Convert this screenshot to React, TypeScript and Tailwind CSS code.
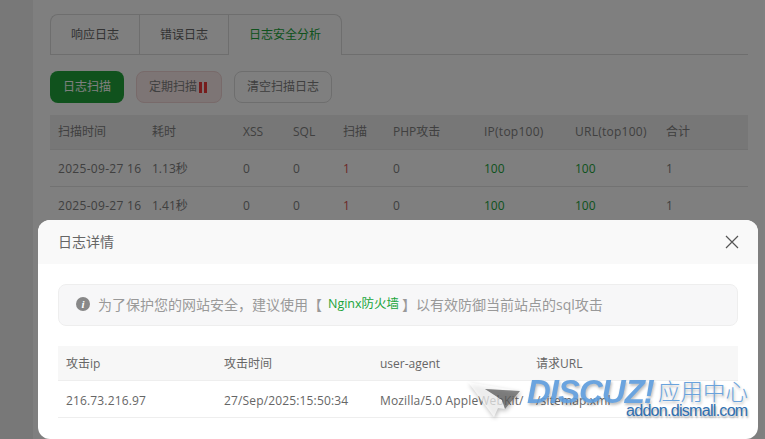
const logFont = "font-['Open_Sans','Noto_Sans_CJK_SC',sans-serif]";

const scanCols = ["w-[94px]", "w-[91px]", "w-[50px]", "w-[50px]", "w-[50px]", "w-[91px]", "w-[91px]", "w-[91px]", "w-[90px]"];
const scanHead = ["扫描时间", "耗时", "XSS", "SQL", "扫描", "PHP攻击", "IP(top100)", "URL(top100)", "合计"];
const scanRows = [
  ["2025-09-27 16", "1.13秒", "0", "0", "1", "0", "100", "100", "1"],
  ["2025-09-27 16", "1.41秒", "0", "0", "1", "0", "100", "100", "1"],
];
const detailCols = ["w-[158px]", "w-[156px]", "w-[156px]", "w-[210px]"];

function cellColor(col: number) {
  if (col === 4) return "text-[#d85050]";
  if (col === 6 || col === 7) return "text-[#20a53a]";
  return "text-[#808080]";
}

function Tabs() {
  const tabs = ["响应日志", "错误日志", "日志安全分析"];
  return (
    <div className="flex h-[41px] border-b border-[#dcdcdc]">
      {tabs.map((t, i) => (
        <div
          key={t}
          className={
            i === 2
              ? "-mb-px flex h-[41px] w-[114px] items-center justify-center rounded-tr-lg border-x border-t border-[#dcdcdc] bg-white text-[#20a53a]"
              : i === 0
                ? "flex h-10 w-[89px] items-center justify-center rounded-tl-lg border-l border-t border-[#dcdcdc] text-[#666]"
                : "flex h-10 w-[89px] items-center justify-center border-l border-t border-[#dcdcdc] text-[#666]"
          }
        >
          {t}
        </div>
      ))}
    </div>
  );
}

function Toolbar() {
  return (
    <div className="mt-4 flex gap-3">
      <button className="h-8 w-[74px] rounded-lg bg-[#20a53a] text-white">日志扫描</button>
      <button className="flex h-8 w-[86px] items-center justify-center gap-[2px] rounded-lg border border-[#f0d4d4] bg-[#fbeaea] pr-[2px] text-[#808080]">
        定期扫描
        <span className="flex gap-[2px]">
          <span className="h-[11px] w-[3px] bg-[#ef3b3b]" />
          <span className="h-[11px] w-[3px] bg-[#ef3b3b]" />
        </span>
      </button>
      <button className="h-8 w-[98px] rounded-lg border border-[#dcdcdc] bg-white text-[#808080]">清空扫描日志</button>
    </div>
  );
}

function ScanTable() {
  return (
    <div className="mt-3 w-[698px]">
      <div className="flex h-[35px] items-center border-b border-[#e4e4e4] bg-[#eeeeee] text-[#808080]">
        {scanHead.map((h, i) => (
          <div key={h} className={`${scanCols[i]} ${i === 6 || i === 7 ? "tracking-[0.25px]" : ""} shrink-0 pl-2`}>{h}</div>
        ))}
      </div>
      {scanRows.map((row, r) => (
        <div key={r} className="flex h-[37px] items-center border-b border-[#e4e4e4] pt-[2px]">
          {row.map((v, i) => (
            <div key={i} className={`${scanCols[i]} ${cellColor(i)} ${i === 0 ? "tracking-[0.3px]" : ""} shrink-0 overflow-hidden pl-2 whitespace-nowrap`}>{v}</div>
          ))}
        </div>
      ))}
    </div>
  );
}

function Watermark() {
  return (
    <div className="absolute left-[466px] top-[376px] h-[48px] w-[290px]">
      <svg className="absolute left-0 top-0 drop-shadow-[1px_2px_2px_rgba(0,0,0,0.35)]" width="60" height="46" viewBox="0 0 60 46">
        <path d="M2 6 L54 15 L19 13 L36 24 L39 33 L32 32 L28 41 Z" fill="#ffffff" fillOpacity="0.7" />
        <path d="M19 13 L54 15 L39 33 L36 24 Z" fill="#5f5f5f" fillOpacity="0.72" />
      </svg>
      <div className="absolute left-[61px] top-[-1px] font-['Liberation_Sans',sans-serif] text-[33px] leading-[34px] font-bold tracking-[-1px] whitespace-nowrap text-[#5b9bdc] italic opacity-90 [text-shadow:1px_2px_3px_rgba(0,0,0,0.3)]">
        DISCUZ!
      </div>
      <div className="absolute left-[192px] top-[-1px] font-['Noto_Sans_CJK_SC',sans-serif] text-[22.5px] leading-[30px] font-light whitespace-nowrap text-[#6aa3dd] [text-shadow:1px_2px_3px_rgba(0,0,0,0.3)]">
        应用中心
      </div>
      <div className="absolute left-[160px] top-[24px] font-['Liberation_Sans',sans-serif] text-[16px] leading-[22px] tracking-[-0.7px] whitespace-nowrap text-[#2f6fb0] [text-shadow:1px_2px_2px_rgba(0,0,0,0.3)]">
        addon.dismall.com
      </div>
    </div>
  );
}

function DetailDialog() {
  return (
    <div className="absolute left-[38px] top-[220px] h-[219px] w-[720px] overflow-hidden rounded-xl bg-white text-[12px]">
      <div className="flex h-11 items-center justify-between bg-[#f9f9f9] pl-5 pr-[19px]">
        <span className="pb-[2px] text-[14px] text-[#666]">日志详情</span>
        <svg width="14" height="14" viewBox="0 0 14 14" fill="none" stroke="#555" strokeWidth="1.2">
          <path d="M1 1 L13 13 M13 1 L1 13" />
        </svg>
      </div>
      <div className="px-5 pt-5">
        <div className="flex h-[42px] items-center rounded-lg border border-[#eee] bg-[#f7f7f8] pb-[2px] pl-[17px] text-[14px] text-[#999]">
          <span className="flex h-[14px] w-[14px] items-center justify-center rounded-full bg-[#888] font-['Liberation_Serif',serif] text-[11px] leading-none font-bold text-white italic">i</span>
          <span className="ml-2">为了保护您的网站安全，建议使用【</span>
          <span className="ml-[6px] text-[12.5px] text-[#20a53a]">Nginx防火墙</span>
          <span className="ml-[3px]">】以有效防御当前站点的sql攻击</span>
        </div>
        <div className="mt-5">
          <div className="flex h-[35px] items-center border-b border-[#eee] bg-[#f7f7f7] pt-[2px] text-[#666]">
            {["攻击ip", "攻击时间", "user-agent", "请求URL"].map((h, i) => (
              <div key={h} className={`${detailCols[i]} pl-2`}>{h}</div>
            ))}
          </div>
          <div className="flex h-[37px] items-center border-b border-[#eee] pt-[3px] tracking-[0.15px] text-[#666]">
            {["216.73.216.97", "27/Sep/2025:15:50:34", "Mozilla/5.0 AppleWebKit/", "/sitemap.xml"].map((v, i) => (
              <div key={v} className={`${detailCols[i]} overflow-hidden pl-2 whitespace-nowrap`}>{v}</div>
            ))}
          </div>
        </div>
      </div>
    </div>
  );
}

export default function App() {
  return (
    <div className={`${logFont} relative h-[439px] w-[765px] overflow-hidden bg-[#f0f0f0] text-[12px]`}>
      <div className="ml-[33px] h-full bg-white pl-[17px] pt-[14px] pr-[17px]">
        <Tabs />
        <Toolbar />
        <ScanTable />
      </div>
      <div className="absolute inset-0 bg-black/50" />
      <DetailDialog />
      <Watermark />
    </div>
  );
}
